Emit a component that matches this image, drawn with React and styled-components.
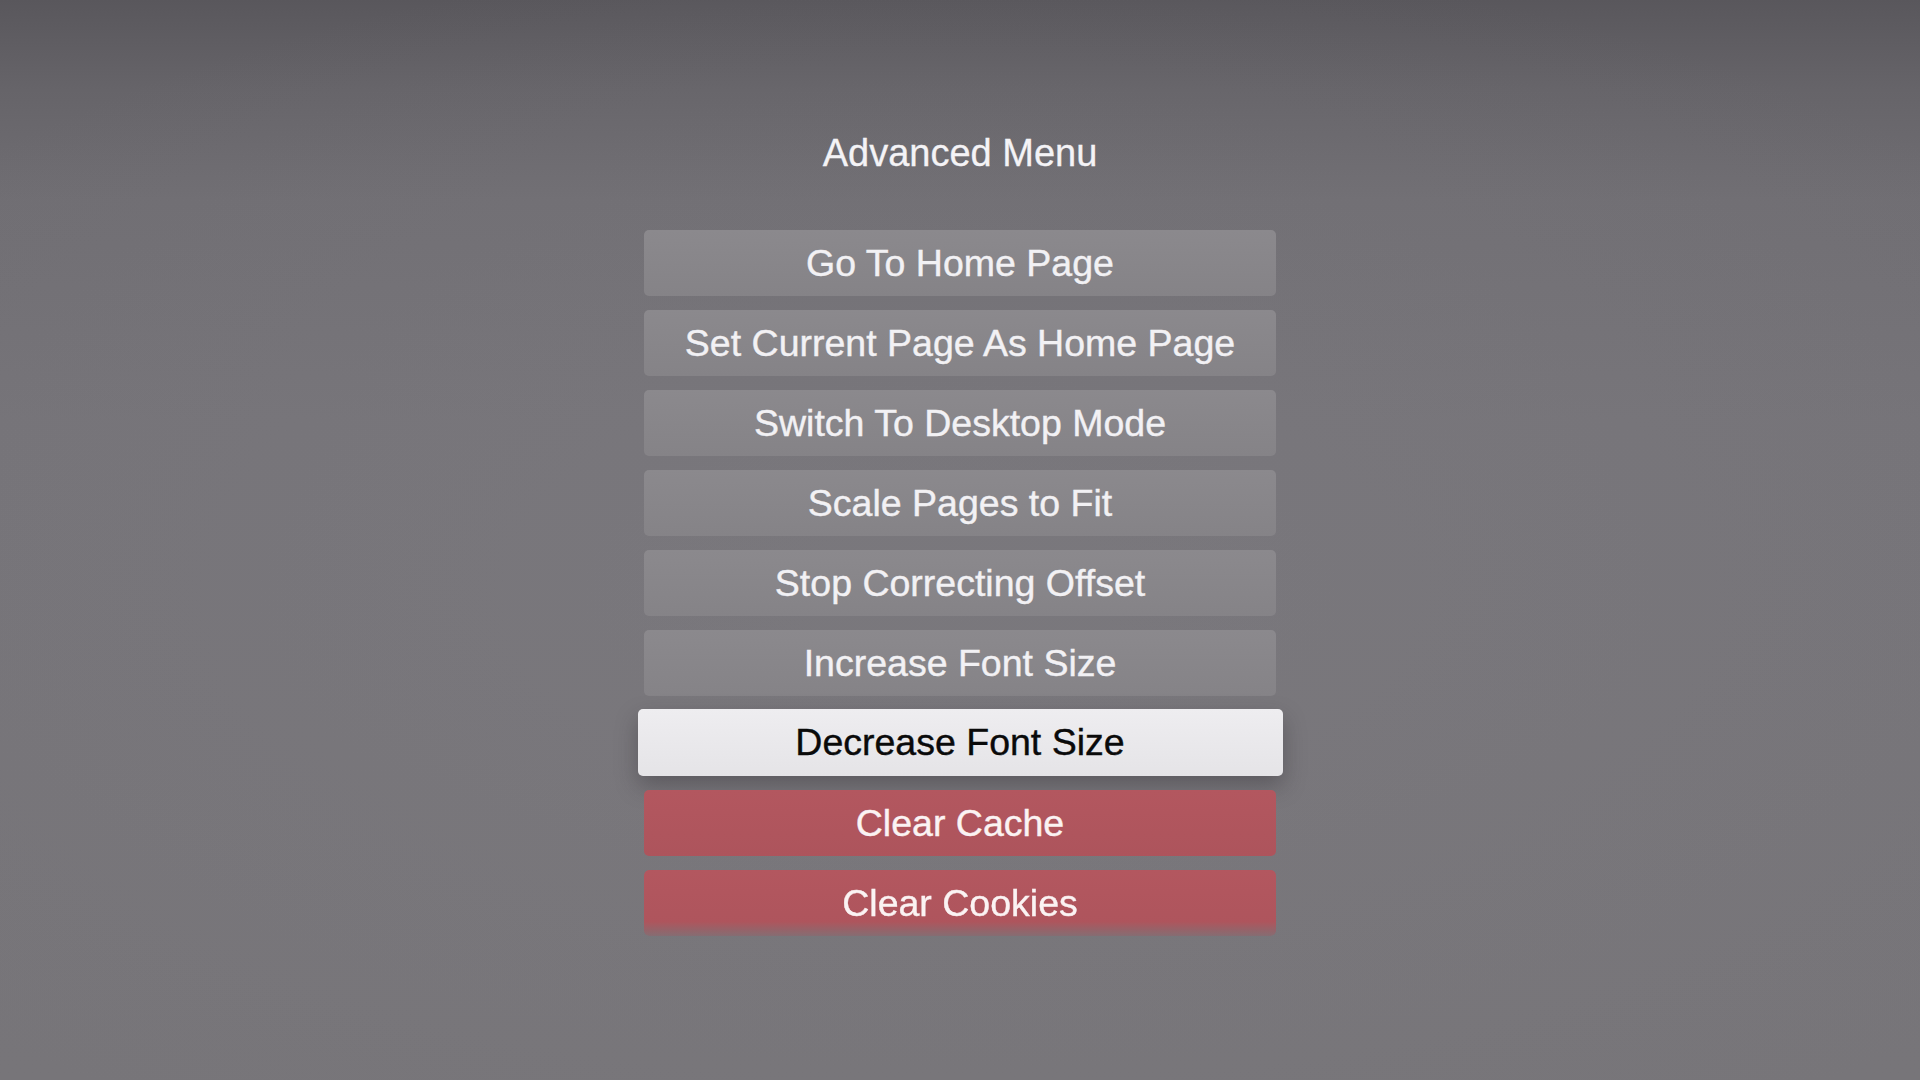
import styled, { createGlobalStyle } from 'styled-components';

const GlobalStyle = createGlobalStyle`
    html, body {
        margin: 0;
        padding: 0;
    }
    body {
        font-family: "Liberation Sans", Arial, sans-serif;
    }
`;

const Screen = styled.div`
    width: 1920px;
    height: 1080px;
    overflow: hidden;
    display: flex;
    flex-direction: column;
    align-items: center;
    background:
        radial-gradient(ellipse 70% 60% at 50% 55%, rgba(130, 128, 133, 0.35), rgba(130, 128, 133, 0) 100%),
        linear-gradient(180deg, #59575c 0px, #666469 90px, #706e73 200px, #757378 420px, #777579 1080px);
`;

const Title = styled.h1`
    margin: 130px 0 0;
    height: 46px;
    line-height: 46px;
    font-size: 38px;
    font-weight: normal;
    color: #f4f3f6;
    -webkit-text-stroke: 0.3px currentColor;
`;

const List = styled.div`
    margin-top: 54px;
    display: flex;
    flex-direction: column;
    align-items: center;
    gap: 14px;
`;

const tones = {
    plain: `
        background: linear-gradient(180deg, #8b898d 0%, #858387 100%);
        color: #f2f1f4;
    `,
    danger: `
        background: linear-gradient(180deg, #b3575f 0%, #ad545c 100%);
        color: #fbf3f3;
    `,
    focused: `
        background: linear-gradient(180deg, #eeedf0 0%, #e5e4e7 100%);
        color: #0a0a0a;
        box-shadow: 0 10px 22px rgba(40, 38, 44, 0.35);
    `,
};

const Item = styled.div`
    width: ${(props) => (props.tone === 'focused' ? 645 : 632)}px;
    height: ${(props) => (props.tone === 'focused' ? 67 : 66)}px;
    margin: ${(props) => (props.tone === 'focused' ? '-1px 0 0' : '0')};
    border-radius: 5px;
    display: flex;
    align-items: center;
    justify-content: center;
    font-size: 37.5px;
    -webkit-text-stroke: 0.4px currentColor;
    ${(props) => tones[props.tone]}
    ${(props) =>
        props.fade &&
        `
        -webkit-mask-image: linear-gradient(180deg, #000 78%, rgba(0,0,0,0.25) 100%);
        mask-image: linear-gradient(180deg, #000 78%, rgba(0,0,0,0.25) 100%);
    `}
`;

const items = [
    { label: 'Go To Home Page', tone: 'plain' },
    { label: 'Set Current Page As Home Page', tone: 'plain' },
    { label: 'Switch To Desktop Mode', tone: 'plain' },
    { label: 'Scale Pages to Fit', tone: 'plain' },
    { label: 'Stop Correcting Offset', tone: 'plain' },
    { label: 'Increase Font Size', tone: 'plain' },
    { label: 'Decrease Font Size', tone: 'focused' },
    { label: 'Clear Cache', tone: 'danger' },
    { label: 'Clear Cookies', tone: 'danger', fade: true },
];

const App = () => (
    <>
        <GlobalStyle />
        <Screen>
            <Title>Advanced Menu</Title>
            <List>
                {items.map((item) => (
                    <Item key={item.label} tone={item.tone} fade={item.fade}>
                        {item.label}
                    </Item>
                ))}
            </List>
        </Screen>
    </>
);

export default App;
